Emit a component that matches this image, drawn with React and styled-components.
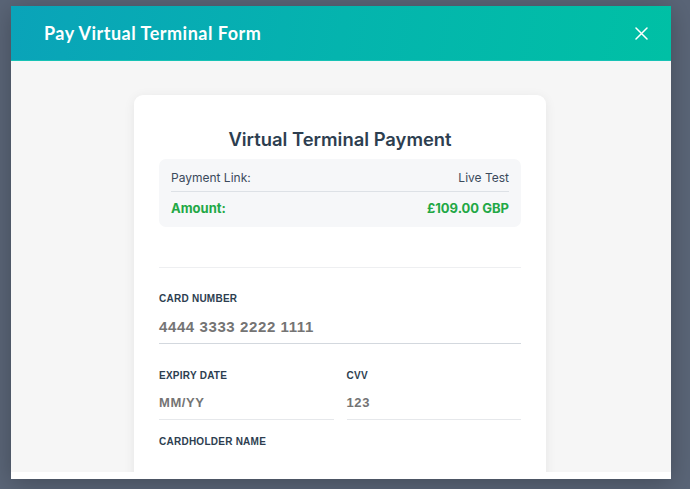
import React from "react";
import styled, { createGlobalStyle } from "styled-components";

const Global = createGlobalStyle`
  html, body { margin: 0; padding: 0; }
  body {
    width: 690px;
    height: 489px;
    overflow: hidden;
    background: #5a6577;
    font-family: Inter, "Liberation Sans", sans-serif;
  }
  * { box-sizing: border-box; }
`;

const Backdrop = styled.div`
  width: 690px;
  height: 489px;
  padding: 6px 0 0 11px;
`;

const Modal = styled.div`
  width: 660px;
  height: 473px;
  background: #ffffff;
  display: flex;
  flex-direction: column;
  box-shadow: 0 4px 24px rgba(0, 0, 0, 0.25);
  overflow: hidden;
`;

const Header = styled.div`
  height: 55px;
  flex: none;
  display: flex;
  align-items: center;
  justify-content: space-between;
  padding: 0 22px 0 33px;
  background: linear-gradient(100deg, #0aa3b9 0%, #04b4ae 50%, #00c0a5 100%);
  border-bottom: 1px solid #17c2b5;
`;

const HeaderTitle = styled.h1`
  margin: 0;
  color: #ffffff;
  font-family: Lato, "Open Sans", sans-serif;
  font-weight: 700;
  font-size: 18px;
  letter-spacing: 0.5px;
`;

const CloseButton = styled.button`
  border: 0;
  background: transparent;
  padding: 0;
  width: 16px;
  height: 16px;
  display: flex;
  align-items: center;
  justify-content: center;
  cursor: pointer;
`;

const Body = styled.div`
  flex: 1;
  margin-bottom: 7px;
  background: #f6f6f6;
  padding: 34px 0 0 123px;
  overflow: hidden;
  display: flex;
`;

const Card = styled.div`
  width: 412px;
  height: 420px;
  flex: none;
  background: #ffffff;
  border-radius: 9px;
  box-shadow: 0 2px 12px rgba(0, 0, 0, 0.07);
  padding: 32px 25px 0;
`;

const CardTitle = styled.h2`
  margin: 0 0 8px;
  text-align: center;
  font-family: Inter, sans-serif;
  font-weight: 600;
  font-size: 18.4px;
  line-height: 24px;
  color: #2d3e50;
`;

const InfoBox = styled.div`
  background: #f6f7f9;
  border-radius: 7px;
  padding: 10px 12px;
`;

const InfoRow = styled.div`
  display: flex;
  justify-content: space-between;
  line-height: 18px;
  font-family: Inter, sans-serif;
  font-size: ${(p) => (p.$strong ? "13px" : "12px")};
  font-weight: ${(p) => (p.$strong ? 700 : 400)};
  color: ${(p) => (p.$strong ? "#22a845" : "#3b4a5c")};
  padding: ${(p) => (p.$strong ? "7px 0 0" : "0 0 4px")};
  border-bottom: ${(p) => (p.$strong ? "0" : "1px solid #dde1e6")};
`;

const Divider = styled.div`
  height: 1px;
  background: #eeeff1;
  margin: 40px 0 24px;
`;

const Field = styled.div`
  margin-bottom: ${(p) => p.$mb || "0"};
  min-width: 0;
`;

const Label = styled.div`
  font-family: "Liberation Sans", Arial, sans-serif;
  font-size: 10px;
  font-weight: 700;
  line-height: 14px;
  letter-spacing: 0.25px;
  color: #2d3e50;
  text-transform: uppercase;
  margin-bottom: ${(p) => p.$gap || "12px"};
`;

const Value = styled.div`
  font-family: "Liberation Sans", Arial, sans-serif;
  font-size: ${(p) => p.$size || "13px"};
  font-weight: 700;
  line-height: 20px;
  letter-spacing: 0.6px;
  color: #747474;
  padding-bottom: 6px;
  border-bottom: 1px solid ${(p) => (p.$dark ? "#d3d8de" : "#e6e8eb")};
`;

const Row = styled.div`
  display: grid;
  grid-template-columns: 1fr 1fr;
  gap: 13px;
  margin-bottom: 15px;
`;

export default function App() {
  return (
    <>
      <Global />
      <Backdrop>
        <Modal>
          <Header>
            <HeaderTitle>Pay Virtual Terminal Form</HeaderTitle>
            <CloseButton aria-label="Close">
              <svg width="13" height="13" viewBox="0 0 13 13">
                <path d="M1 1 L12 12 M12 1 L1 12" stroke="#fff" strokeWidth="1.5" strokeLinecap="round" />
              </svg>
            </CloseButton>
          </Header>
          <Body>
            <Card>
              <CardTitle>Virtual Terminal Payment</CardTitle>
              <InfoBox>
                <InfoRow>
                  <span>Payment Link:</span>
                  <span>Live Test</span>
                </InfoRow>
                <InfoRow $strong>
                  <span>Amount:</span>
                  <span>£109.00 GBP</span>
                </InfoRow>
              </InfoBox>
              <Divider />
              <Field $mb="25px">
                <Label $gap="11px">Card Number</Label>
                <Value $size="15px" $dark>4444 3333 2222 1111</Value>
              </Field>
              <Row>
                <Field>
                  <Label $gap="10px">Expiry Date</Label>
                  <Value>MM/YY</Value>
                </Field>
                <Field>
                  <Label $gap="10px">CVV</Label>
                  <Value>123</Value>
                </Field>
              </Row>
              <Field>
                <Label>Cardholder Name</Label>
              </Field>
            </Card>
          </Body>
        </Modal>
      </Backdrop>
    </>
  );
}
